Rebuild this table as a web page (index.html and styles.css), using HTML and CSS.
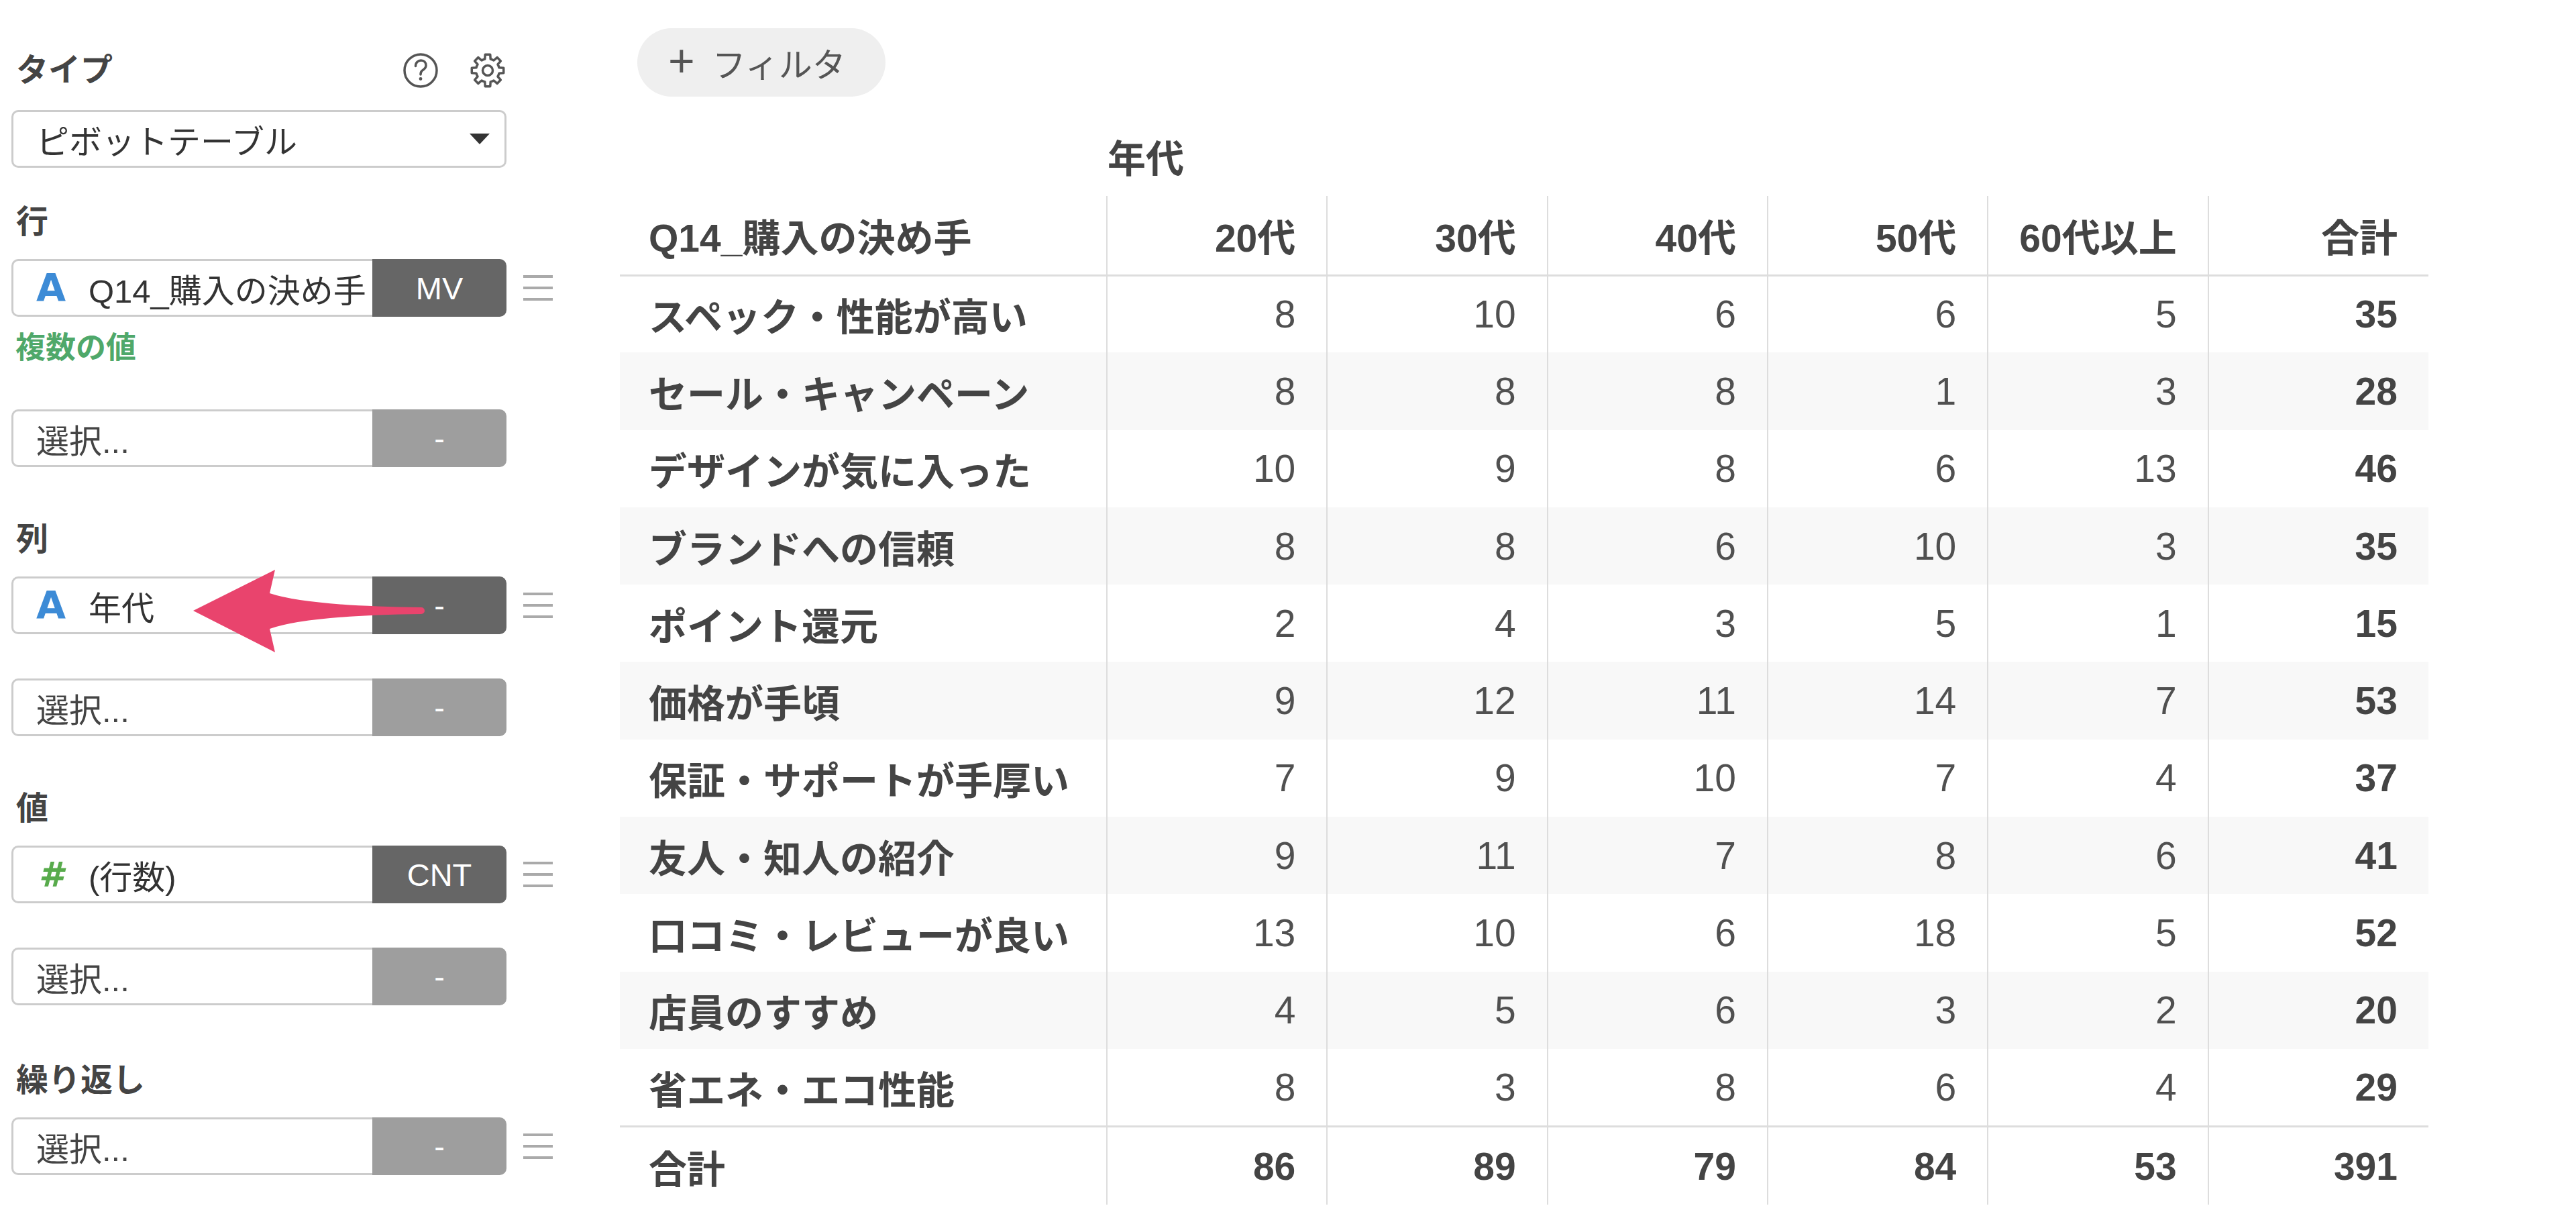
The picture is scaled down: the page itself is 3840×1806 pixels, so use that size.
FILE: index.html
```html
<!DOCTYPE html>
<html lang="ja">
<head>
<meta charset="utf-8">
<title>ピボットテーブル</title>
<link rel="stylesheet" href="styles.css">
</head>
<body>
<div class="app">
  <aside class="sidebar">
    <div class="type-head">
      <span class="label">タイプ</span>
      <div class="tools">
        <svg class="tool-icon" viewBox="-28 -28 56 56" aria-label="ヘルプ">
          <circle cx="0" cy="0" r="24" fill="none" stroke="#555" stroke-width="3.5"/>
          <path d="M-7.5,-6.5 C-7.5,-12 -3.5,-15 0.5,-15 C5,-15 8,-12 8,-7.5 C8,-3 4.5,-1.5 2.2,0.3 C0.6,1.5 0,3 0,6" fill="none" stroke="#555" stroke-width="3.5" stroke-linecap="round"/>
          <circle cx="0" cy="12.5" r="2.4" fill="#555"/>
        </svg>
        <svg class="tool-icon" viewBox="-28 -28 56 56" aria-label="設定">
          <path d="M16.98,-4.23 L23.70,-3.75 L23.70,3.75 L16.98,4.23 A17.5,17.5 0 0 1 15.00,9.02 L19.41,14.11 L14.11,19.41 L9.02,15.00 A17.5,17.5 0 0 1 4.23,16.98 L3.75,23.70 L-3.75,23.70 L-4.23,16.98 A17.5,17.5 0 0 1 -9.02,15.00 L-14.11,19.41 L-19.41,14.11 L-15.00,9.02 A17.5,17.5 0 0 1 -16.98,4.23 L-23.70,3.75 L-23.70,-3.75 L-16.98,-4.23 A17.5,17.5 0 0 1 -15.00,-9.02 L-19.41,-14.11 L-14.11,-19.41 L-9.02,-15.00 A17.5,17.5 0 0 1 -4.23,-16.98 L-3.75,-23.70 L3.75,-23.70 L4.23,-16.98 A17.5,17.5 0 0 1 9.02,-15.00 L14.11,-19.41 L19.41,-14.11 L15.00,-9.02 A17.5,17.5 0 0 1 16.98,-4.23 Z" fill="none" stroke="#555" stroke-width="3.5" stroke-linejoin="round"/>
          <circle cx="0" cy="0" r="7.5" fill="none" stroke="#555" stroke-width="3.5"/>
        </svg>
      </div>
    </div>
    <div class="select">
      <span>ピボットテーブル</span>
      <span class="caret"></span>
    </div>

    <section class="group group-first">
      <div class="label">行</div>
      <div class="row">
        <div class="field">
          <div class="field-main"><span class="type type-a">A</span><span class="name">Q14_購入の決め手</span></div>
          <div class="btn btn-dark">MV</div>
        </div>
        <span class="handle"><i></i><i></i><i></i></span>
      </div>
      <div class="note">複数の値</div>
      <div class="row">
        <div class="field">
          <div class="field-main"><span class="placeholder">選択...</span></div>
          <div class="btn btn-light">-</div>
        </div>
      </div>
    </section>

    <section class="group">
      <div class="label">列</div>
      <div class="row">
        <div class="field">
          <div class="field-main"><span class="type type-a">A</span><span class="name">年代</span></div>
          <div class="btn btn-dark">-</div>
        </div>
        <span class="handle"><i></i><i></i><i></i></span>
      </div>
      <div class="row">
        <div class="field">
          <div class="field-main"><span class="placeholder">選択...</span></div>
          <div class="btn btn-light">-</div>
        </div>
      </div>
    </section>

    <section class="group">
      <div class="label">値</div>
      <div class="row">
        <div class="field">
          <div class="field-main"><span class="type type-num">#</span><span class="name">(行数)</span></div>
          <div class="btn btn-dark">CNT</div>
        </div>
        <span class="handle"><i></i><i></i><i></i></span>
      </div>
      <div class="row">
        <div class="field">
          <div class="field-main"><span class="placeholder">選択...</span></div>
          <div class="btn btn-light">-</div>
        </div>
      </div>
    </section>

    <section class="group group-last">
      <div class="label">繰り返し</div>
      <div class="row">
        <div class="field">
          <div class="field-main"><span class="placeholder">選択...</span></div>
          <div class="btn btn-light">-</div>
        </div>
        <span class="handle"><i></i><i></i><i></i></span>
      </div>
    </section>
  </aside>

  <main class="main">
    <div class="filter"><span class="plus">+</span><span>フィルタ</span></div>
    <div class="year-label">年代</div>
    <table class="pivot">
      <colgroup>
        <col class="c-first">
        <col class="c-num"><col class="c-num"><col class="c-num"><col class="c-num"><col class="c-num"><col class="c-num">
      </colgroup>
      <thead>
        <tr><th>Q14_購入の決め手</th><th>20代</th><th>30代</th><th>40代</th><th>50代</th><th>60代以上</th><th>合計</th></tr>
      </thead>
      <tbody>
        <tr><th>スペック・性能が高い</th><td>8</td><td>10</td><td>6</td><td>6</td><td>5</td><td class="total">35</td></tr>
        <tr><th>セール・キャンペーン</th><td>8</td><td>8</td><td>8</td><td>1</td><td>3</td><td class="total">28</td></tr>
        <tr><th>デザインが気に入った</th><td>10</td><td>9</td><td>8</td><td>6</td><td>13</td><td class="total">46</td></tr>
        <tr><th>ブランドへの信頼</th><td>8</td><td>8</td><td>6</td><td>10</td><td>3</td><td class="total">35</td></tr>
        <tr><th>ポイント還元</th><td>2</td><td>4</td><td>3</td><td>5</td><td>1</td><td class="total">15</td></tr>
        <tr><th>価格が手頃</th><td>9</td><td>12</td><td>11</td><td>14</td><td>7</td><td class="total">53</td></tr>
        <tr><th>保証・サポートが手厚い</th><td>7</td><td>9</td><td>10</td><td>7</td><td>4</td><td class="total">37</td></tr>
        <tr><th>友人・知人の紹介</th><td>9</td><td>11</td><td>7</td><td>8</td><td>6</td><td class="total">41</td></tr>
        <tr><th>口コミ・レビューが良い</th><td>13</td><td>10</td><td>6</td><td>18</td><td>5</td><td class="total">52</td></tr>
        <tr><th>店員のすすめ</th><td>4</td><td>5</td><td>6</td><td>3</td><td>2</td><td class="total">20</td></tr>
        <tr><th>省エネ・エコ性能</th><td>8</td><td>3</td><td>8</td><td>6</td><td>4</td><td class="total">29</td></tr>
      </tbody>
      <tfoot>
        <tr><th>合計</th><td>86</td><td>89</td><td>79</td><td>84</td><td>53</td><td>391</td></tr>
      </tfoot>
    </table>
  </main>
</div>

<svg class="arrow" viewBox="0 0 370 140" aria-hidden="true">
  <path d="M8,70 L130,9 L122,44 Q179,63 348,65 A5,5 0 0 1 348,75 Q179,77 122,97 L130,132 Z" fill="#e9446d"/>
</svg>
</body>
</html>
```

FILE: styles.css
```css
* { box-sizing: border-box; }

html, body {
  margin: 0;
  padding: 0;
  background: #ffffff;
}

body {
  position: relative;
  width: 3840px;
  height: 1806px;
  overflow: hidden;
  font-family: "Liberation Sans", "Noto Sans CJK JP", sans-serif;
  color: #333333;
}

.app {
  display: flex;
  align-items: flex-start;
}

/* ---------- sidebar ---------- */
.sidebar {
  flex: none;
  width: 924px;
  padding: 77px 0 0 17px;
}

.type-head {
  width: 738px;
  height: 56px;
  display: flex;
  align-items: center;
  justify-content: space-between;
}

.label {
  font-size: 48px;
  font-weight: 700;
  line-height: 56px;
  color: #444444;
  padding-left: 7px;
}

.tools {
  display: flex;
  align-items: center;
  gap: 44px;
}

.tool-icon {
  width: 56px;
  height: 56px;
  display: block;
}

.select {
  margin-top: 31px;
  width: 738px;
  height: 86px;
  border: 3px solid #cccccc;
  border-radius: 10px;
  display: flex;
  align-items: center;
  justify-content: space-between;
  padding: 0 22px 0 34px;
  font-size: 49px;
  color: #333333;
}

.caret {
  width: 0;
  height: 0;
  border-left: 15px solid transparent;
  border-right: 15px solid transparent;
  border-top: 16px solid #333333;
}

.group { margin-top: 80px; }
.group-first { margin-top: 53px; }
.group-last { margin-top: 84px; }

.group .label { margin-bottom: 27px; }

.row {
  display: flex;
  align-items: center;
  gap: 25px;
}

.row + .row { margin-top: 66px; }

.field {
  flex: none;
  width: 738px;
  height: 86px;
  display: flex;
}

.field-main {
  flex: 1;
  min-width: 0;
  display: flex;
  align-items: center;
  border: 3px solid #cccccc;
  border-right: none;
  border-radius: 10px 0 0 10px;
  padding-left: 34px;
  font-size: 49px;
  color: #333333;
  white-space: nowrap;
  overflow: hidden;
}

.placeholder { color: #444444; }

.type {
  flex: none;
  width: 44px;
  margin-right: 34px;
  text-align: center;
  font-family: "DejaVu Sans", sans-serif;
  font-weight: 700;
  line-height: 1;
}

.type-a {
  font-size: 57px;
  color: #3d8bd6;
}

.type-num {
  font-size: 52px;
  font-style: italic;
  color: #58ab4c;
}

.btn {
  flex: none;
  width: 200px;
  border-radius: 0 10px 10px 0;
  display: flex;
  align-items: center;
  justify-content: center;
  font-size: 47px;
  color: #ffffff;
}

.btn-dark { background: #666666; }
.btn-light { background: #9e9e9e; }

.handle {
  flex: none;
  width: 44px;
  height: 38px;
  display: flex;
  flex-direction: column;
  justify-content: space-between;
}

.handle i {
  display: block;
  height: 4px;
  background: #aaaaaa;
}

.note {
  margin: 22px 0 66px;
  padding-left: 6px;
  font-size: 45px;
  font-weight: 700;
  line-height: 50px;
  color: #4fa86a;
}

/* ---------- main ---------- */
.main {
  flex: none;
  width: 2696px;
  padding-top: 42px;
}

.filter {
  display: flex;
  align-items: center;
  width: 370px;
  height: 102px;
  margin-left: 26px;
  padding-left: 46px;
  border-radius: 51px;
  background: #efefef;
  font-size: 50px;
  color: #555555;
}

.plus {
  font-size: 68px;
  font-weight: 300;
  line-height: 1;
  margin-right: 26px;
  margin-top: -6px;
}

.year-label {
  margin: 63px 0 0 727px;
  font-size: 57px;
  font-weight: 700;
  line-height: 60px;
  color: #444444;
}

.pivot {
  margin-top: 25px;
  width: 2696px;
  table-layout: fixed;
  border-collapse: collapse;
  font-size: 57px;
  color: #505050;
}

.c-first { width: 726px; }
.c-num { width: 328.33px; }

.pivot th,
.pivot td {
  padding: 0 46px;
  text-align: right;
  white-space: nowrap;
  border-left: 2px solid #dddddd;
  font-weight: 400;
}

.pivot th:first-child {
  border-left: none;
  text-align: left;
  padding-left: 43px;
  padding-right: 0;
  font-weight: 700;
  color: #444444;
}

.pivot thead tr { height: 118px; }
.pivot thead th {
  font-weight: 700;
  color: #444444;
  border-bottom: 3px solid #dddddd;
}

.pivot tbody tr { height: 115.3px; }
.pivot tbody tr:nth-child(even) { background: #f8f8f8; }

.pivot td.total {
  font-weight: 700;
  color: #444444;
}

.pivot tfoot tr { height: 117px; }
.pivot tfoot th,
.pivot tfoot td {
  border-top: 3px solid #dddddd;
  font-weight: 700;
  color: #444444;
}

/* ---------- annotation arrow ---------- */
.arrow {
  position: absolute;
  left: 280px;
  top: 840px;
  width: 370px;
  height: 140px;
}
```
